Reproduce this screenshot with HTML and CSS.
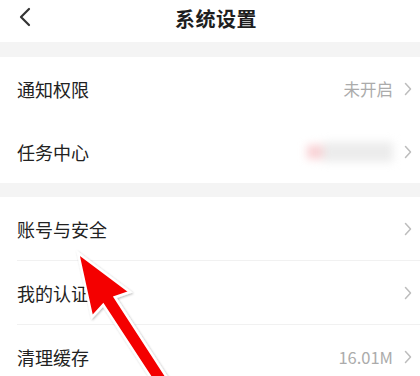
FILE: index.html
```html
<!DOCTYPE html>
<html lang="zh">
<head>
<meta charset="utf-8">
<link rel="stylesheet" href="styles.css">
</head>
<body>
<div class="page">
  <header class="topbar">
    <svg class="back" width="14" height="20" viewBox="0 0 14 20"><path d="M11 2 L3 10 L11 18" fill="none" stroke="#333" stroke-width="2.2" stroke-linecap="round" stroke-linejoin="round"/></svg>
    <h1 class="title">系统设置</h1>
  </header>
  <div class="gap"></div>
  <section class="group">
    <div class="row"><span class="label">通知权限</span><span class="value">未开启</span><svg class="chev" width="8" height="14" viewBox="0 0 8 14"><path d="M1.5 1.5 L6.5 7 L1.5 12.5" fill="none" stroke="#bdbdbd" stroke-width="1.5" stroke-linecap="round" stroke-linejoin="round"/></svg></div>
    <div class="row"><span class="label">任务中心</span><span class="blurred"><span class="pink"></span><span class="grey"></span></span><svg class="chev" width="8" height="14" viewBox="0 0 8 14"><path d="M1.5 1.5 L6.5 7 L1.5 12.5" fill="none" stroke="#bdbdbd" stroke-width="1.5" stroke-linecap="round" stroke-linejoin="round"/></svg></div>
  </section>
  <div class="gap"></div>
  <section class="group">
    <div class="row line"><span class="label">账号与安全</span><svg class="chev" width="8" height="14" viewBox="0 0 8 14"><path d="M1.5 1.5 L6.5 7 L1.5 12.5" fill="none" stroke="#bdbdbd" stroke-width="1.5" stroke-linecap="round" stroke-linejoin="round"/></svg></div>
    <div class="row line"><span class="label">我的认证</span><svg class="chev" width="8" height="14" viewBox="0 0 8 14"><path d="M1.5 1.5 L6.5 7 L1.5 12.5" fill="none" stroke="#bdbdbd" stroke-width="1.5" stroke-linecap="round" stroke-linejoin="round"/></svg></div>
    <div class="row"><span class="label">清理缓存</span><span class="value">16.01M</span><svg class="chev" width="8" height="14" viewBox="0 0 8 14"><path d="M1.5 1.5 L6.5 7 L1.5 12.5" fill="none" stroke="#bdbdbd" stroke-width="1.5" stroke-linecap="round" stroke-linejoin="round"/></svg></div>
  </section>
  <svg class="arrow" width="420" height="376" viewBox="0 0 420 376">
    <defs>
      <filter id="sh" x="-20%" y="-20%" width="140%" height="140%">
        <feDropShadow dx="1" dy="1" stdDeviation="1" flood-color="#000" flood-opacity="0.28"/>
      </filter>
    </defs>
    <polygon points="78,253 130,292 114.8,297.2 176,391.5 164.6,398.5 103.2,304.8 92,317" fill="#f40000" stroke="#ffffff" stroke-width="2.5" stroke-linejoin="miter" filter="url(#sh)"/>
  </svg>
</div>
</body>
</html>
```
FILE: styles.css
```css
* { box-sizing: border-box; }
html, body { margin: 0; padding: 0; background: #fff; }
body {
  font-family: "Noto Sans CJK SC", "Noto Sans", "Liberation Sans", sans-serif;
  color: #222;
}
.page {
  position: relative;
  width: 420px;
  height: 376px;
  overflow: hidden;
}
.topbar {
  height: 42px;
  display: flex;
  align-items: center;
  justify-content: center;
  padding-left: 12px;
  position: relative;
}
.back {
  position: absolute;
  left: 18px;
  top: 7px;
}
.title {
  margin: 0 0 4px 0;
  font-size: 20px;
  font-weight: 700;
  color: #1e1e1e;
  letter-spacing: 0.5px;
  line-height: 1;
}
.gap {
  height: 15px;
  background: #f4f4f4;
}
.group { background: #fff; }
.group + .gap { height: 14px; }
.row {
  height: 63px;
  display: flex;
  align-items: center;
  padding: 0 8px 0 17px;
  position: relative;
}
.group:last-of-type .row { height: 64px; }
.row.line::after {
  content: "";
  position: absolute;
  left: 17px;
  right: 0;
  bottom: 0;
  height: 1px;
  background: #f1f1f1;
}
.label {
  flex: 1;
  font-size: 18px;
  line-height: 1;
  color: #222;
}
.value {
  font-size: 16.5px;
  color: #ababab;
  margin-right: 11px;
  font-family: "Noto Sans CJK SC", "Liberation Sans", sans-serif;
}
.chev { flex: none; }
.blurred {
  width: 86px;
  height: 20px;
  margin-right: 11px;
  display: flex;
  filter: blur(4px);
}
.pink {
  width: 16px;
  height: 14px;
  margin-top: 3px;
  background: #f9d2d5;
}
.grey {
  flex: 1;
  background: #ececec;
}
.arrow {
  position: absolute;
  left: 0;
  top: 0;
  pointer-events: none;
}
```
